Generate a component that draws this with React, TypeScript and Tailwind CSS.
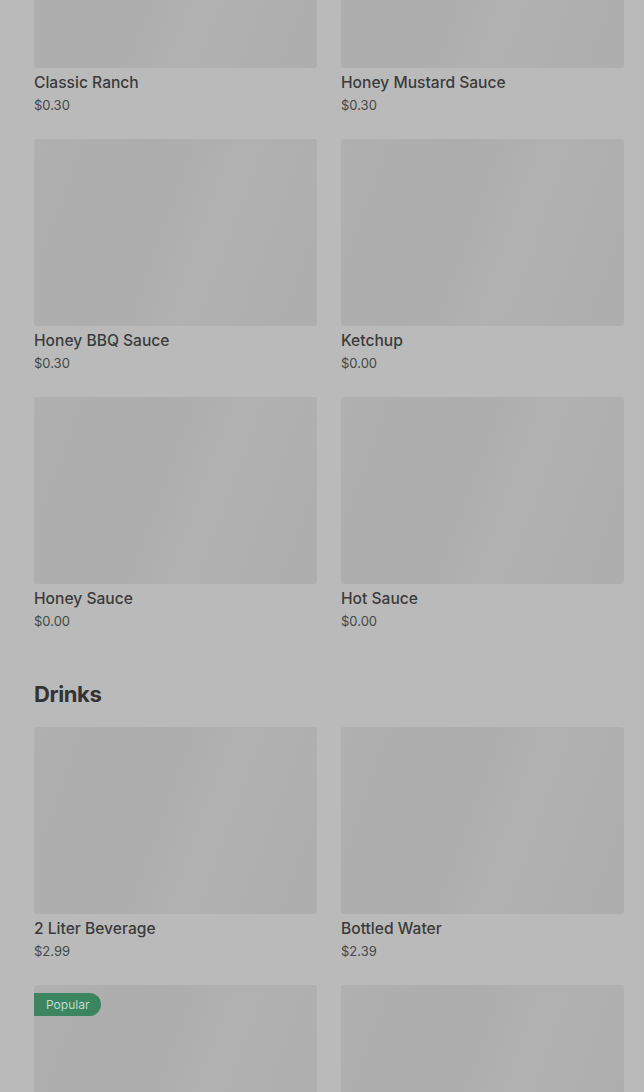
type Item = { name: string; price: string; popular?: boolean };

const sauces: Item[] = [
  { name: "Classic Ranch", price: "$0.30" },
  { name: "Honey Mustard Sauce", price: "$0.30" },
  { name: "Honey BBQ Sauce", price: "$0.30" },
  { name: "Ketchup", price: "$0.00" },
  { name: "Honey Sauce", price: "$0.00" },
  { name: "Hot Sauce", price: "$0.00" },
];

const drinks: Item[] = [
  { name: "2 Liter Beverage", price: "$2.99" },
  { name: "Bottled Water", price: "$2.39" },
  { name: "Fountain Drink", price: "$2.19", popular: true },
  { name: "Sweet Tea", price: "$2.19" },
];

function ItemCard({ item }: { item: Item }) {
  return (
    <div className="flex flex-col">
      <div className="relative h-[187px] rounded-[3px] bg-[linear-gradient(110deg,#b0b0b0_0%,#adadad_35%,#b1b1b1_60%,#aeaeae_100%)]">
        {item.popular && (
          <span className="absolute left-0 top-[8px] h-[23px] rounded-r-full bg-[#3b8660] pl-[12px] pr-[12px] text-[12px] leading-[23px] text-[#c6d9cc]">
            Popular
          </span>
        )}
      </div>
      <div className="mt-[3px] text-[15.6px] leading-[24px] font-medium text-[#3b3b3b]">
        {item.name}
      </div>
      <div className="text-[13px] leading-[20px] text-[#474747]">
        {item.price}
      </div>
    </div>
  );
}

export default function App() {
  return (
    <div
      className="h-[1092px] overflow-hidden bg-[#bababa]"
      style={{ fontFamily: "Inter, 'Noto Sans', sans-serif" }}
    >
      <div className="-mt-[119px] pl-[34px] pr-[20px]">
        <div className="grid grid-cols-2 gap-x-6 gap-y-6">
          {sauces.map((item) => (
            <ItemCard key={item.name} item={item} />
          ))}
        </div>

        <h2 className="mt-[47px] mb-[17px] text-[22px] leading-[32px] font-bold tracking-[-0.4px] text-[#333333]">
          Drinks
        </h2>

        <div className="grid grid-cols-2 gap-x-6 gap-y-6">
          {drinks.map((item) => (
            <ItemCard key={item.name} item={item} />
          ))}
        </div>
      </div>
    </div>
  );
}
